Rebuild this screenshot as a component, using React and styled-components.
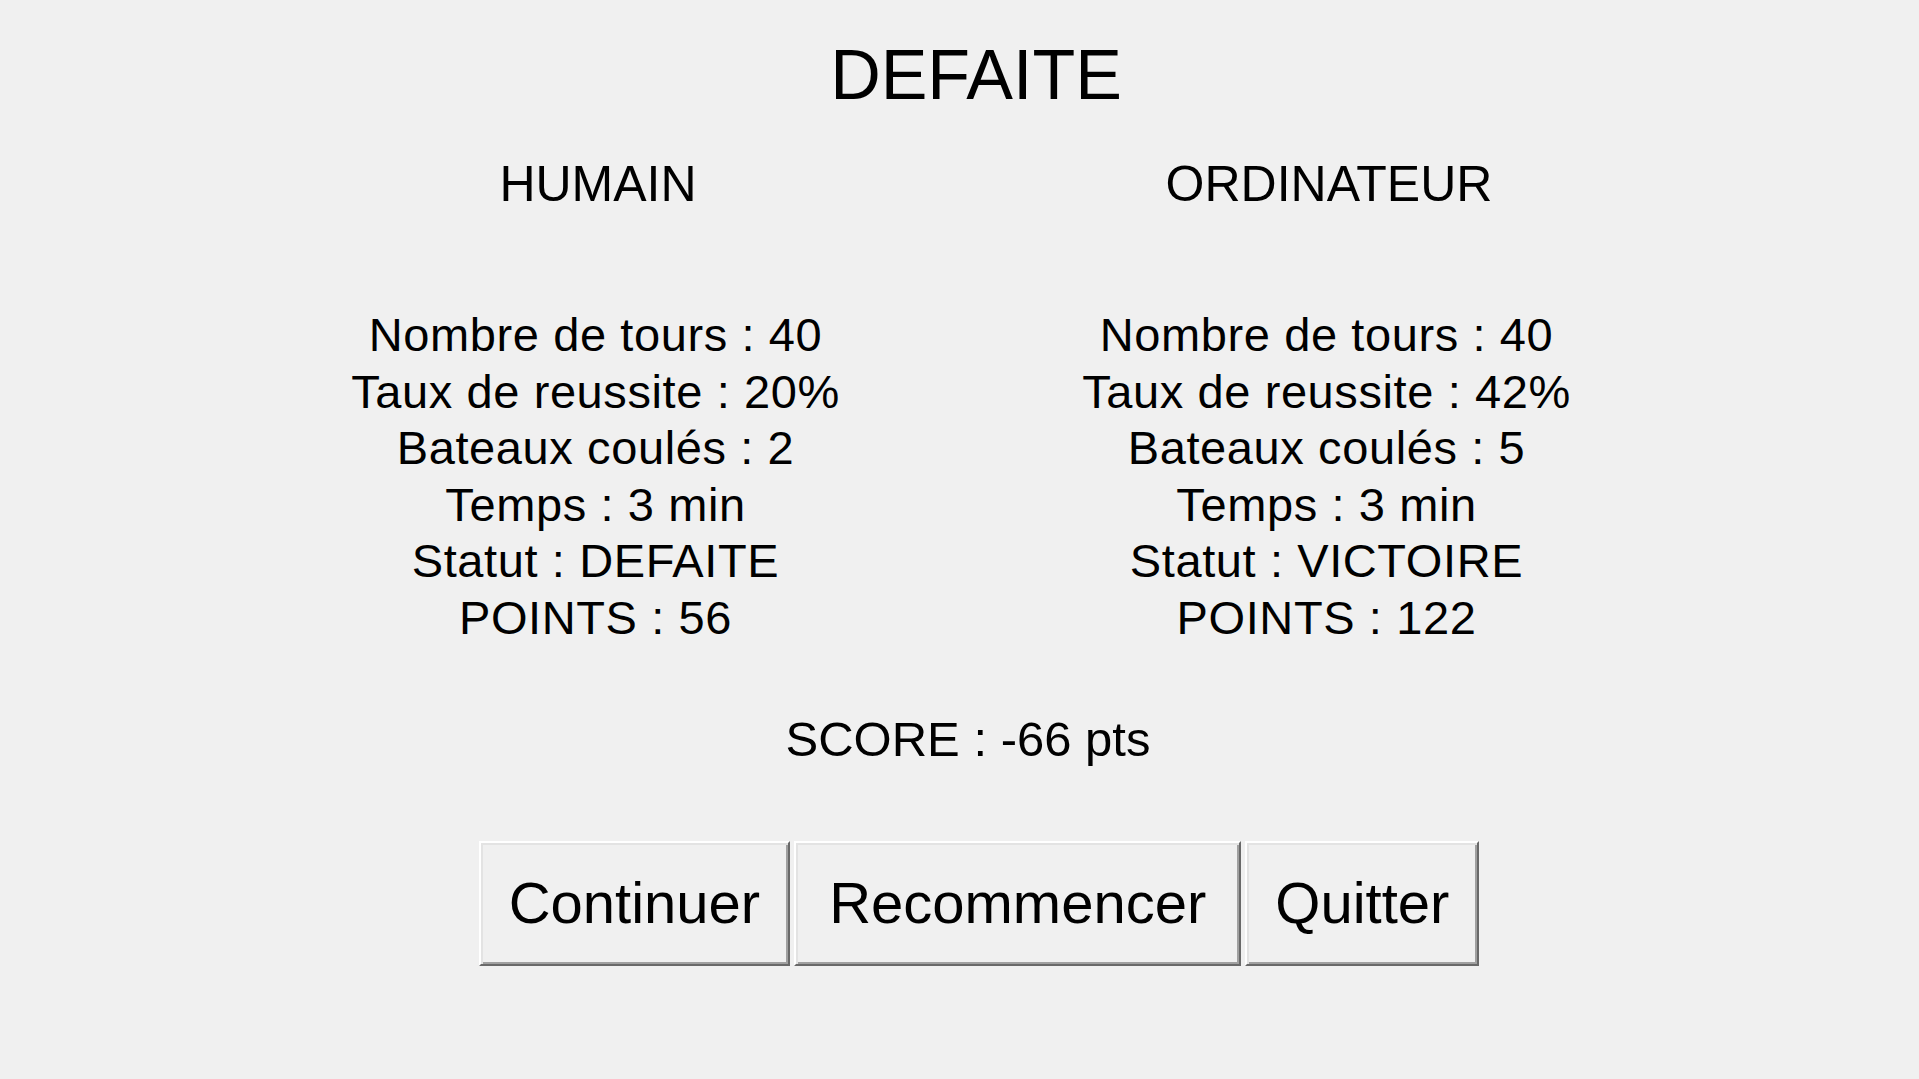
import React from 'react'
import styled, {createGlobalStyle} from 'styled-components'

const players = [
    {
        name: 'HUMAIN',
        stats: [
            'Nombre de tours : 40',
            'Taux de reussite : 20%',
            'Bateaux coulés : 2',
            'Temps : 3 min',
            'Statut : DEFAITE',
            'POINTS : 56',
        ],
    },
    {
        name: 'ORDINATEUR',
        stats: [
            'Nombre de tours : 40',
            'Taux de reussite : 42%',
            'Bateaux coulés : 5',
            'Temps : 3 min',
            'Statut : VICTOIRE',
            'POINTS : 122',
        ],
    },
]

export default function App() {
    return (
        <>
            <GlobalStyle />
            <Screen>
                <Title>DEFAITE</Title>
                <Players>
                    {players.map((p) => (
                        <Player key={p.name}>
                            <PlayerName>{p.name}</PlayerName>
                            <Stats>
                                {p.stats.map((s) => (
                                    <li key={s}>{s}</li>
                                ))}
                            </Stats>
                        </Player>
                    ))}
                </Players>
                <Score>SCORE : -66 pts</Score>
                <Actions>
                    <Button>Continuer</Button>
                    <Button $padX={33}>Recommencer</Button>
                    <Button>Quitter</Button>
                </Actions>
            </Screen>
        </>
    )
}

const GlobalStyle = createGlobalStyle`
    html, body {
        margin: 0;
        padding: 0;
        background: #f0f0f0;
    }
    body {
        font-family: "Liberation Sans", Arial, sans-serif;
        color: #000;
    }
`

// whole window
const Screen = styled.div`
    min-height: 100vh;
    box-sizing: border-box;
    padding-top: 35px;
    display: flex;
    flex-direction: column;
    align-items: center;
`

const Title = styled.h1`
    margin: 0;
    padding-left: 33px;
    font-weight: 400;
    font-size: 70px;
    line-height: 80px;
`

// the two score sheets
const Players = styled.div`
    margin-top: 39px;
    display: grid;
    grid-template-columns: 600px 600px;
    column-gap: 131px;
`

const Player = styled.section`
    display: flex;
    flex-direction: column;
    align-items: center;
`

const PlayerName = styled.h2`
    margin: 0;
    padding-left: 8px;
    font-weight: 400;
    font-size: 50px;
    line-height: 60px;
`

const Stats = styled.ul`
    list-style: none;
    margin: 93px 0 0;
    padding: 0 0 0 3px;
    font-size: 47px;
    line-height: 56.6px;
    letter-spacing: 0.6px;
    text-align: center;
`

const Score = styled.p`
    margin: 63px 0 0;
    padding-left: 17px;
    font-size: 49px;
    line-height: 58px;
`

// buttons
const Actions = styled.div`
    margin-top: 73px;
    padding-left: 39px;
    display: flex;
    gap: 4px;
`

const Button = styled.button`
    font-family: inherit;
    font-size: 58px;
    line-height: 67px;
    color: #000;
    padding: 26px ${(p) => p.$padX || 28}px 28px;
    background: #f0f0f0;
    border: 2px solid;
    border-color: #ffffff #696969 #696969 #ffffff;
    border-radius: 0;
    box-shadow: inset 2px 2px #e3e3e3, inset -2px -2px #a0a0a0;
    cursor: pointer;
`
